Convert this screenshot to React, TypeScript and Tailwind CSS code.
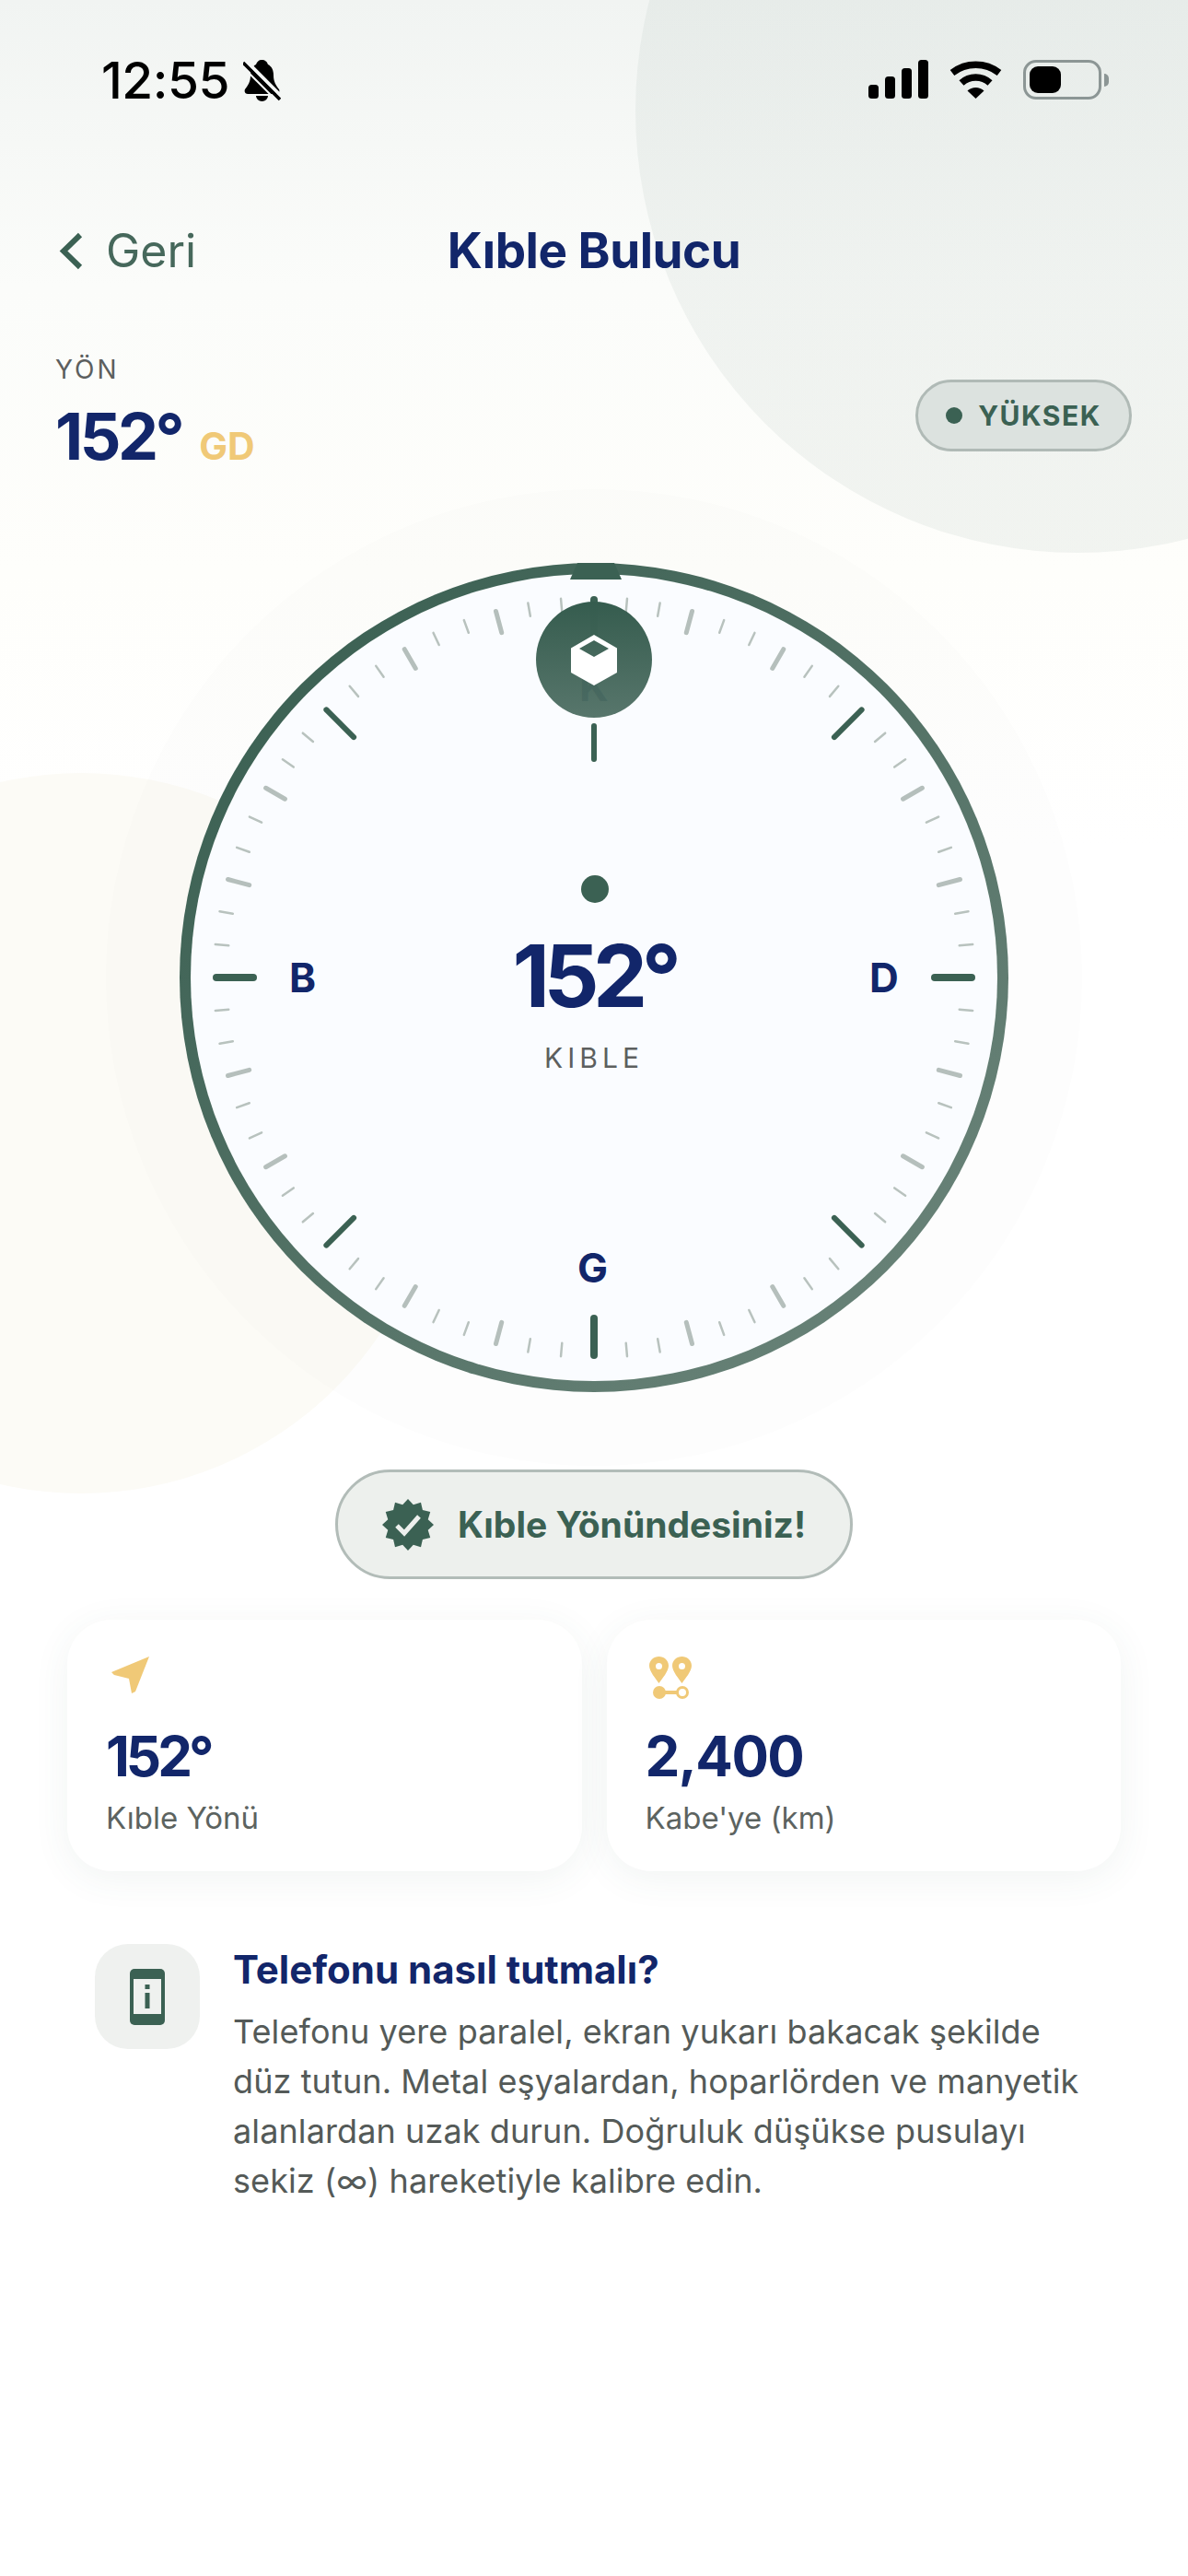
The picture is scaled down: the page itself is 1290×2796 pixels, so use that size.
import React from "react";

const ticks = Array.from({ length: 72 }, (_, i) => i * 5);

const tickStyle = (deg: number) => {
  if (deg % 90 === 0) return { r1: 366, w: 8, color: "#3b6153" };
  if (deg % 45 === 0) return { r1: 366, w: 6, color: "#3b6153" };
  if (deg % 15 === 0) return { r1: 385, w: 5, color: "#b5bfbc" };
  return { r1: 397, w: 2.5, color: "#b8c2be" };
};

const sealPoints = Array.from({ length: 24 }, (_, i) => {
  const a = (i * 15 * Math.PI) / 180;
  const r = i % 2 === 0 ? 28 : 22.5;
  return `${28 + r * Math.sin(a)},${28 - r * Math.cos(a)}`;
}).join(" ");

const StatusBar = () => (
  <div className="h-[222px] pt-[65px] pl-[110px] pr-[86px] flex justify-between items-start">
    <div className="flex items-start gap-[15px]">
      <span className="text-[55px] leading-[45px] font-medium text-black tracking-[-0.5px]">12:55</span>
      <svg width="41" height="45" viewBox="0 0 41 45">
        <path d="M20 0C24 0 26 2 27 5C31 7 33 11 33 17C33 24 36 28 39 32C40 34 39 37 36 37L5 37C2 37 1 34 2 32C5 28 8 24 8 17C8 11 10 7 14 5C15 2 17 0 20 0Z" fill="#000" />
        <path d="M14 39h13a6.5 6 0 0 1-13 0Z" fill="#000" />
        <path d="M3 1L43 41" stroke="#f4f6f5" strokeWidth="4" />
        <path d="M0 3L40 43" stroke="#000" strokeWidth="3.5" />
        <path d="M-3 5L37 45" stroke="#f4f6f5" strokeWidth="2" />
      </svg>
    </div>
    <div className="flex items-start gap-[23px]">
      <svg width="65" height="42" viewBox="0 0 65 42">
        <rect x="0" y="27" width="11" height="15" rx="3.5" fill="#000" />
        <rect x="18" y="18" width="11" height="24" rx="3.5" fill="#000" />
        <rect x="36" y="9" width="11" height="33" rx="3.5" fill="#000" />
        <rect x="54" y="0" width="11" height="42" rx="3.5" fill="#000" />
      </svg>
      <svg width="57" height="42" viewBox="0 0 57 42">
        <path d="M3 14A41.7 41.7 0 0 1 54 14" stroke="#000" strokeWidth="7.5" fill="none" />
        <path d="M13 25A23 23 0 0 1 44 25" stroke="#000" strokeWidth="7.5" fill="none" />
        <path d="M19.5 33.5A13 13 0 0 1 37.5 33.5L28.5 42Z" fill="#000" />
      </svg>
      <div className="flex items-center gap-[3px]">
        <div className="w-[85px] h-[43px] rounded-[14px] border-[3px] border-[#8c9695] p-[4px]">
          <div className="w-[34px] h-full rounded-[9px] bg-black" />
        </div>
        <div className="w-[5px] h-[14px] rounded-r-full bg-[#8c9695]" />
      </div>
    </div>
  </div>
);

const Compass = () => (
  <div className="relative w-[900px] h-[900px] mx-auto mt-[99px] rounded-full bg-gradient-to-br from-[#355c4e] to-[#6f877d]">
    <div className="absolute inset-[12px] rounded-full bg-[#fafcff]" />
    <svg className="absolute inset-0" width="900" height="900" viewBox="0 0 900 900">
      {ticks.map((deg) => {
        const s = tickStyle(deg);
        const a = (deg * Math.PI) / 180;
        const r1 = s.r1 + s.w / 2;
        const r2 = 414 - s.w / 2;
        return (
          <line
            key={deg}
            x1={450 + r1 * Math.sin(a)}
            y1={450 - r1 * Math.cos(a)}
            x2={450 + r2 * Math.sin(a)}
            y2={450 - r2 * Math.cos(a)}
            stroke={s.color}
            strokeWidth={s.w}
            strokeLinecap="round"
          />
        );
      })}
      <path d="M4 18L12 0H52L60 18Z" transform="translate(420 0)" fill="#3b6153" />
      <line x1="450" y1="177" x2="450" y2="213" stroke="#3b6153" strokeWidth="6" strokeLinecap="round" />
      <circle cx="451" cy="354" r="15" fill="#3b6153" />
    </svg>

    <span className="absolute left-[119px] top-[434px] text-[44px] leading-[32px] font-bold text-[#12266a]">B</span>
    <span className="absolute left-[749px] top-[434px] text-[44px] leading-[32px] font-bold text-[#12266a]">D</span>
    <span className="absolute left-[432px] top-[749px] text-[44px] leading-[32px] font-bold text-[#12266a]">G</span>
    <span className="absolute left-[434px] top-[118px] text-[44px] leading-[32px] font-bold text-[#12266a]">K</span>

    <div className="absolute left-[387px] top-[42px] w-[126px] h-[126px] rounded-full bg-gradient-to-b from-[#355c4e] to-[#4f6f64]/95 flex items-center justify-center">
      <svg width="50" height="55" viewBox="0 0 50 55">
        <path d="M25 0L50 14.5V41L25 55L0 41V14.5ZM25 6L9 15L25 24L41 15Z" fill="#fff" fillRule="evenodd" />
      </svg>
    </div>

    <div className="absolute inset-x-0 top-[398px] flex flex-col items-center">
      <span className="text-[94px] leading-[100px] font-bold text-[#12266a] tracking-[-6.5px]">152°</span>
      <span className="mt-[21px] text-[30px] leading-[36px] text-[#5c5f5e] tracking-[5px]">KIBLE</span>
    </div>
  </div>
);

const StatCard = ({ icon, value, label }: { icon: React.ReactNode; value: React.ReactNode; label: string }) => (
  <div className="h-[273px] rounded-[48px] bg-white shadow-[0_8px_40px_rgba(59,97,83,0.07)] pl-[42px] pt-[40px]">
    <div className="h-[46px] flex items-center">{icon}</div>
    <div className="mt-[32px] text-[60px] leading-[60px] font-bold text-[#12266a] tracking-[-1.5px]">{value}</div>
    <div className="mt-[17px] text-[33px] leading-[40px] text-[#5c6360]">{label}</div>
  </div>
);

const App = () => {
  return (
    <div className="relative w-[1290px] h-[2796px] overflow-hidden bg-white font-[Inter,sans-serif]">
      <div className="absolute inset-x-0 top-0 h-[620px] bg-gradient-to-b from-[#f1f4f2] via-[#fbfcfa] to-[#fefefb]" />
      <div className="absolute inset-x-0 top-[620px] h-[300px] bg-gradient-to-b from-[#fefefb] to-white" />
      <div className="absolute left-[690px] top-[-360px] w-[960px] h-[960px] rounded-full bg-gradient-to-b from-[#3b6153]/[0.05] to-[#3b6153]/[0.065]" />
      <div className="absolute left-[-303px] top-[839px] w-[782px] h-[782px] rounded-full bg-[#fcfbf6]" />
      <div className="absolute left-[115px] top-[531px] w-[1060px] h-[1060px] rounded-full bg-[#3b6153]/[0.012]" />

      <div className="relative">
        <StatusBar />

        <div className="h-[100px] px-[64px] grid grid-cols-[1fr_auto_1fr] items-center">
          <div className="flex items-center gap-[25px]">
            <svg width="26" height="41" viewBox="0 0 26 41">
              <path d="M23 3L5 20.5L23 38" stroke="#3b6153" strokeWidth="6" fill="none" />
            </svg>
            <span className="text-[50px] leading-[50px] text-[#46685b]">Geri</span>
          </div>
          <span className="text-[53px] leading-[50px] font-bold text-[#12266a] tracking-[-0.5px]">Kıble Bulucu</span>
          <div />
        </div>

        <div className="mt-[63px] pl-[60px] pr-[61px] flex justify-between items-center">
          <div>
            <div className="text-[28px] leading-[32px] text-[#5c5f5e] tracking-[3px]">YÖN</div>
            <div className="mt-[19px] flex items-baseline gap-[19px]">
              <span className="text-[70px] leading-[76px] font-bold text-[#12266a] tracking-[-3.5px]">152°</span>
              <span className="text-[41px] leading-[40px] font-bold text-[#f0c977]">GD</span>
            </div>
          </div>
          <div className="mt-[5px] w-[235px] h-[78px] rounded-full border-[3px] border-[#b0bab6] bg-[#dce2df] flex items-center justify-center gap-[17px]">
            <span className="w-[18px] h-[18px] rounded-full bg-[#3b6153]" />
            <span className="text-[30px] leading-[36px] font-bold text-[#3b6153] tracking-[1.5px]">YÜKSEK</span>
          </div>
        </div>

        <Compass />

        <div className="mt-[84px] mx-auto w-[562px] h-[119px] rounded-full border-[3px] border-[#b2bcb8] bg-[#edf0ed] flex items-center justify-center gap-[26px]">
          <svg width="56" height="56" viewBox="0 0 56 56">
            <polygon points={sealPoints} fill="#3b6153" />
            <path d="M16 29L24 37L40 19" stroke="#edf0ed" strokeWidth="5" fill="none" />
          </svg>
          <span className="text-[39px] leading-[48px] font-bold text-[#3b6153]">Kıble Yönündesiniz!</span>
        </div>

        <div className="mt-[44px] px-[73px] grid grid-cols-2 gap-[27px]">
          <StatCard
            value={<span className="tracking-[-4px]">152°</span>}
            label="Kıble Yönü"
            icon={
              <svg className="mt-[-4px] ml-[5px]" width="43" height="42" viewBox="0 0 43 42">
                <path d="M42 0L1 17L4 20L20 24L23 40L27 38Z" fill="#f0c977" />
              </svg>
            }
          />
          <StatCard
            value="2,400"
            label="Kabe'ye (km)"
            icon={
              <svg className="ml-[4px]" width="46" height="46" viewBox="0 0 46 46">
                <path fillRule="evenodd" fill="#f0c977" d="M10.5 0C16 0 21 4 21 10C21 16 14 24 10.5 29C7 24 0 16 0 10C0 4 5 0 10.5 0ZM10.5 7A3.5 3.5 0 1 0 10.5 14A3.5 3.5 0 1 0 10.5 7Z" />
                <path fillRule="evenodd" fill="#f0c977" d="M35.5 0C41 0 46 4 46 10C46 16 39 24 35.5 29C32 24 25 16 25 10C25 4 30 0 35.5 0ZM35.5 7A3.5 3.5 0 1 0 35.5 14A3.5 3.5 0 1 0 35.5 7Z" />
                <circle cx="11" cy="39" r="7" fill="#f0c977" />
                <rect x="14" y="37" width="20" height="4" fill="#f0c977" />
                <circle cx="36" cy="39" r="5.5" fill="#fff" stroke="#f0c977" strokeWidth="3" />
              </svg>
            }
          />
        </div>

        <div className="mt-[79px] pl-[103px] flex gap-[36px]">
          <div className="w-[114px] h-[114px] rounded-[36px] bg-[#eff1ef] flex items-center justify-center shrink-0">
            <svg width="38" height="61" viewBox="0 0 38 61">
              <rect width="38" height="61" rx="5" fill="#3b6153" />
              <rect x="4" y="11" width="30" height="38" fill="#eff1ef" />
              <rect x="16.5" y="17" width="5" height="5" fill="#3b6153" />
              <rect x="16.5" y="26" width="5" height="17" fill="#3b6153" />
            </svg>
          </div>
          <div className="mt-[4px]">
            <div className="text-[42px] leading-[48px] font-bold text-[#12266a]">Telefonu nasıl tutmalı?</div>
            <p className="mt-[16px] text-[36px] leading-[54px] text-[#545a58] tracking-[0.1px]">
              <span className="block whitespace-nowrap">Telefonu yere paralel, ekran yukarı bakacak şekilde</span>
              <span className="block whitespace-nowrap">düz tutun. Metal eşyalardan, hoparlörden ve manyetik</span>
              <span className="block whitespace-nowrap">alanlardan uzak durun. Doğruluk düşükse pusulayı</span>
              <span className="block whitespace-nowrap">sekiz (∞) hareketiyle kalibre edin.</span>
            </p>
          </div>
        </div>
      </div>
    </div>
  );
};

export default App;
